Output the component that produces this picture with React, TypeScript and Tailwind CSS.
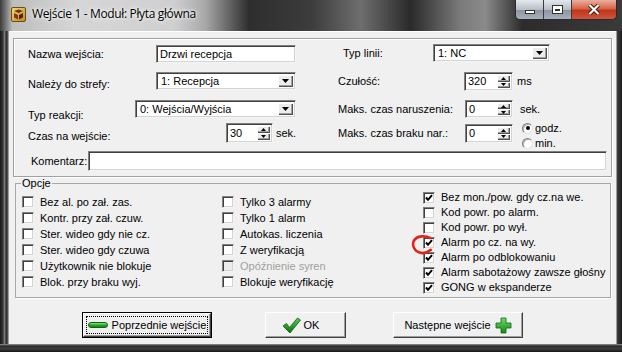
import React from "react";

const sunken =
  "bg-white border border-t-[#808080] border-l-[#808080] border-b-[#f4f4f4] border-r-[#f4f4f4] shadow-[inset_1px_1px_0_#404040,inset_-1px_-1px_0_#d4d4d4]";
const bevel =
  "bg-[#ececec] shadow-[inset_1px_1px_0_#ffffff,inset_-1px_-1px_0_#505050,inset_-2px_-2px_0_#a0a0a0]";
const btn =
  "bg-[#f0f0f0] border border-t-white border-l-white border-b-[#404040] border-r-[#404040] shadow-[inset_-1px_-1px_0_#a0a0a0]";

function Tri({ up = false, small = false }: { up?: boolean; small?: boolean }) {
  const w = small ? 5 : 7;
  const h = small ? 3 : 4;
  return (
    <svg width={w} height={h} viewBox={`0 0 ${w} ${h}`}>
      <polygon points={up ? `0,${h} ${w},${h} ${w / 2},0` : `0,0 ${w},0 ${w / 2},${h}`} fill="#000" />
    </svg>
  );
}

function Field({ value, className }: { value: string; className: string }) {
  return <div className={`${sunken} flex h-full items-center pl-[3px] ${className}`}>{value}</div>;
}

function Select({ value, className }: { value: string; className: string }) {
  return (
    <div className={`${sunken} flex h-full items-stretch p-[2px] ${className}`}>
      <span className="flex flex-1 items-center pl-[2px]">{value}</span>
      <span className={`${bevel} flex w-[15px] items-center justify-center`}>
        <Tri />
      </span>
    </div>
  );
}

function Spin({ value, className }: { value: string; className: string }) {
  return (
    <div className={`${sunken} flex h-full items-stretch p-[2px] ${className}`}>
      <span className="flex flex-1 items-center pl-[1px]">{value}</span>
      <span className="flex w-[13px] flex-col">
        <span className={`${bevel} flex flex-1 items-center justify-center`}>
          <Tri up small />
        </span>
        <span className={`${bevel} flex flex-1 items-center justify-center`}>
          <Tri small />
        </span>
      </span>
    </div>
  );
}

function Box({ label, on = false, disabled = false }: { label: string; on?: boolean; disabled?: boolean }) {
  return (
    <div className="flex h-full items-center">
      <span
        className={`flex h-[12px] w-[12px] shrink-0 items-center justify-center border border-t-[#808080] border-l-[#808080] border-b-[#f4f4f4] border-r-[#f4f4f4] shadow-[inset_1px_1px_0_#404040,inset_-1px_-1px_0_#d4d4d4] ${
          disabled ? "bg-[#ececec]" : "bg-white"
        }`}
      >
        {on && (
          <svg width="8" height="8" viewBox="0 0 8 8">
            <path d="M1 3.5 L3 5.8 L7 1.2" stroke="#000" strokeWidth="2" fill="none" />
          </svg>
        )}
      </span>
      <span className={`ml-[6px] whitespace-nowrap ${disabled ? "text-[#a0a0a0]" : ""}`}>{label}</span>
    </div>
  );
}

function Radio({ label, on = false }: { label: string; on?: boolean }) {
  return (
    <div className="flex h-[15px] items-center">
      <span className="flex h-[11px] w-[11px] items-center justify-center rounded-full border border-[#808080] border-b-[#e4e4e4] border-r-[#e4e4e4] bg-white shadow-[inset_1px_1px_0_#b0b0b0]">
        {on && <span className="h-[4px] w-[4px] rounded-full bg-black" />}
      </span>
      <span className="ml-[2px]">{label}</span>
    </div>
  );
}

function TitleIcon() {
  return (
    <svg width="15" height="15" viewBox="0 0 15 15">
      <defs>
        <linearGradient id="ig" x1="0" y1="0" x2="1" y2="1">
          <stop offset="0" stopColor="#f6de7a" />
          <stop offset="1" stopColor="#b88a1c" />
        </linearGradient>
      </defs>
      <rect x="0.5" y="0.5" width="14" height="14" rx="1.5" fill="url(#ig)" stroke="#6b4f10" />
      <path d="M3 4 L7.5 2.5 L12 4 L7.5 6 Z" fill="#7a2a10" />
      <path d="M3 6 L7 8 L7 12.5 L3 10.5 Z" fill="#8a3414" />
      <path d="M12 6 L8 8 L8 12.5 L12 10.5 Z" fill="#5a200c" />
    </svg>
  );
}

function Minus() {
  return <span className="h-[6px] w-[20px] rounded-[3px] border border-[#106010] bg-[linear-gradient(180deg,#8ee68e_0%,#30b030_45%,#138a13_100%)]" />;
}

function Plus() {
  return (
    <svg width="17" height="17" viewBox="0 0 17 17">
      <defs>
        <linearGradient id="pg" x1="0" y1="0" x2="0" y2="1">
          <stop offset="0" stopColor="#6fdc6f" />
          <stop offset="1" stopColor="#118a11" />
        </linearGradient>
      </defs>
      <path d="M6 1 H11 V6 H16 V11 H11 V16 H6 V11 H1 V6 H6 Z" fill="url(#pg)" stroke="#0e6a0e" strokeWidth="0.8" />
    </svg>
  );
}

function Tick() {
  return (
    <svg width="19" height="17" viewBox="0 0 19 17">
      <defs>
        <linearGradient id="tg" x1="0" y1="0" x2="0" y2="1">
          <stop offset="0" stopColor="#58d058" />
          <stop offset="1" stopColor="#0c700c" />
        </linearGradient>
      </defs>
      <path d="M1 9 L4.5 6.5 L7.5 10.5 L15.5 1 L18.5 3 L8 16 Z" fill="url(#tg)" stroke="#0a5a0a" strokeWidth="0.8" />
    </svg>
  );
}

export default function App() {
  return (
    <div className="flex h-[352px] w-[622px] flex-col overflow-hidden bg-[#1e1e1e] font-['Liberation_Sans',Arial,sans-serif] text-[11px] text-black">
      {/* title bar */}
      <div className="flex h-[31px] shrink-0 items-start bg-[linear-gradient(90deg,#3a3a3a_0%,#bdbdbd_2%,#d6d6d6_12%,#cfcfcf_28%,#a8a8a8_33%,#2e2e2e_40%,#3c3c3c_50%,#6e6e6e_58%,#2a2a2a_66%,#7a7a7a_74%,#8a8a8a_78%,#2c2c2c_84%,#3a3a3a_100%)]">
        <span className="ml-[11px] mt-[7px]">
          <TitleIcon />
        </span>
        <span className="ml-[6px] mt-[6px] font-['Open_Sans','Noto_Sans',sans-serif] text-[12px] leading-[16px] tracking-[-0.35px] [text-shadow:0_0_6px_#ffffff,0_0_3px_#ffffff]">
          Wejście 1 - Moduł: Płyta główna
        </span>
        <div className="ml-auto mr-[5px] flex h-[20px] overflow-hidden rounded-b-[5px] border border-t-0 border-[#2a2a2a]">
          <div className="flex w-[28px] items-end justify-center border-r border-[#3a3a3a] bg-[linear-gradient(180deg,#e4e8ee_0%,#b8bec8_50%,#8e96a2_55%,#a8b0bc_100%)] pb-[5px]">
            <span className="h-[4px] w-[10px] border border-[#303030] bg-white" />
          </div>
          <div className="flex w-[28px] items-center justify-center border-r border-[#3a3a3a] bg-[linear-gradient(180deg,#e4e8ee_0%,#b8bec8_50%,#8e96a2_55%,#a8b0bc_100%)]">
            <span className="h-[9px] w-[11px] border border-[#303030] bg-white p-[2px] pt-[3px]">
              <span className="block h-full w-full border border-[#303030] bg-[#9aa2ae]" />
            </span>
          </div>
          <div className="flex w-[44px] items-center justify-center bg-[linear-gradient(180deg,#eab0a0_0%,#d8644a_45%,#c0361c_55%,#d0543a_100%)]">
            <svg width="12" height="11" viewBox="0 0 12 11">
              <path d="M1.5 1 L10.5 10 M10.5 1 L1.5 10" stroke="#3a1208" strokeWidth="4" />
              <path d="M1.5 1 L10.5 10 M10.5 1 L1.5 10" stroke="#ffffff" strokeWidth="2.2" />
            </svg>
          </div>
        </div>
      </div>

      {/* frame + client */}
      <div className="flex h-[313px] shrink-0">
        <div className="w-[9px] bg-[linear-gradient(90deg,#161616_0%,#3c3c3c_35%,#7a7a7a_50%,#2c2c2c_70%,#5a5a5a_88%,#d8d8d8_100%)]" />
        <div className="flex w-[607px] flex-col bg-[#f0f0f0] shadow-[inset_0_1px_0_#ffffff]">
          {/* top panel */}
          <div className="ml-[4px] mt-[7px] flex h-[139px] w-[599px] flex-col border border-[#a0a0a0] shadow-[inset_1px_1px_0_#ffffff,1px_1px_0_#ffffff]">
            <div className="flex h-[105px]">
              <div className="ml-[14px] mt-[6px] flex w-[272px] flex-col">
                <div className="flex h-[18px] items-center">
                  <span className="w-[128px] shrink-0">Nazwa wejścia:</span>
                  <Field value="Drzwi recepcja" className="w-[140px]" />
                </div>
                <div className="mt-[9px] flex h-[18px] items-center">
                  <span className="w-[128px] shrink-0 pt-[6px]">Należy do strefy:</span>
                  <Select value="1: Recepcja" className="w-[140px]" />
                </div>
                <div className="mt-[10px] flex h-[18px] items-center">
                  <span className="w-[107px] shrink-0 pt-[13px]">Typ reakcji:</span>
                  <Select value="0: Wejścia/Wyjścia" className="w-[161px]" />
                </div>
                <div className="mt-[5px] flex h-[20px] items-center">
                  <span className="w-[198px] shrink-0 pt-[6px]">Czas na wejście:</span>
                  <Spin value="30" className="w-[47px]" />
                  <span className="ml-[3px]">sek.</span>
                </div>
              </div>
              <div className="ml-[38px] mt-[5px] flex flex-col">
                <div className="flex h-[18px] items-center">
                  <span className="w-[95px] shrink-0 pl-[5px]">Typ linii:</span>
                  <Select value="1: NC" className="w-[117px]" />
                </div>
                <div className="mt-[10px] flex h-[19px] items-center">
                  <span className="w-[126px] shrink-0">Czułość:</span>
                  <Spin value="320" className="w-[49px]" />
                  <span className="ml-[4px]">ms</span>
                </div>
                <div className="mt-[9px] flex h-[18px] items-center">
                  <span className="w-[127px] shrink-0">Maks. czas naruszenia:</span>
                  <Spin value="0" className="w-[48px]" />
                  <span className="ml-[7px]">sek.</span>
                </div>
                <div className="mt-[6px] flex h-[19px] items-center">
                  <span className="w-[127px] shrink-0">Maks. czas braku nar.:</span>
                  <Spin value="0" className="w-[48px]" />
                  <div className="ml-[9px] flex flex-col pt-[4px]">
                    <Radio label="godz." on />
                    <Radio label="min." />
                  </div>
                </div>
              </div>
            </div>
            <div className="mt-[7px] flex h-[20px] items-center">
              <span className="ml-[17px] w-[57px] shrink-0">Komentarz:</span>
              <Field value="" className="w-[519px]" />
            </div>
          </div>

          {/* options */}
          <fieldset className="ml-[6px] h-[121px] w-[596px] border border-[#a7a7a7] shadow-[1px_1px_0_#ffffff]">
            <legend className="ml-[5px] px-[1px] leading-[13px]">Opcje</legend>
            <div className="flex">
              <div className="ml-[6px] flex w-[200px] flex-col pt-[4px]">
                {[
                  "Bez al. po zał. zas.",
                  "Kontr. przy zał. czuw.",
                  "Ster. wideo gdy nie cz.",
                  "Ster. wideo gdy czuwa",
                  "Użytkownik nie blokuje",
                  "Blok. przy braku wyj.",
                ].map((t) => (
                  <div key={t} className="h-[16px]">
                    <Box label={t} />
                  </div>
                ))}
              </div>
              <div className="flex w-[201px] flex-col pt-[4px]">
                <div className="h-[16px]"><Box label="Tylko 3 alarmy" /></div>
                <div className="h-[16px]"><Box label="Tylko 1 alarm" /></div>
                <div className="h-[16px]"><Box label="Autokas. liczenia" /></div>
                <div className="h-[16px]"><Box label="Z weryfikacją" /></div>
                <div className="h-[16px]"><Box label="Opóźnienie syren" disabled /></div>
                <div className="h-[16px]"><Box label="Blokuje weryfikację" /></div>
              </div>
              <div className="flex flex-col">
                <div className="h-[15px]"><Box label="Bez mon./pow. gdy cz.na we." on /></div>
                <div className="h-[15px]"><Box label="Kod powr. po alarm." /></div>
                <div className="h-[15px]"><Box label="Kod powr. po wył." /></div>
                <div className="relative h-[15px]">
                  <Box label="Alarm po cz. na wy." on />
                  <svg className="absolute left-[-12px] top-[-3px]" width="26" height="24" viewBox="0 0 26 24">
                    <path
                      d="M19 6 C14 3.2, 6 3.6, 3 8.5 C0.8 12.5, 2.8 18.8, 8.5 20.6 C12.5 21.8, 16.5 20.6, 19.8 17.8"
                      stroke="#e0241c"
                      strokeWidth="2.6"
                      fill="none"
                      strokeLinecap="round"
                    />
                  </svg>
                </div>
                <div className="h-[15px]"><Box label="Alarm po odblokowaniu" on /></div>
                <div className="h-[15px]"><Box label="Alarm sabotażowy zawsze głośny" on /></div>
                <div className="h-[15px]"><Box label="GONG w ekspanderze" on /></div>
              </div>
            </div>
          </fieldset>

          {/* buttons */}
          <div className="ml-[73px] mt-[14px] flex h-[26px]">
            <div className="flex w-[130px] border border-black">
              <div className={`${btn} flex flex-1 p-[2px]`}>
                <div className="flex flex-1 items-center justify-center gap-[4px] border border-dotted border-black">
                  <Minus />
                  <span>Poprzednie wejście</span>
                </div>
              </div>
            </div>
            <div className={`${btn} ml-[53px] flex w-[81px] items-center justify-center gap-[3px] pr-[10px]`}>
              <Tick />
              <span>OK</span>
            </div>
            <div className={`${btn} ml-[47px] flex w-[130px] items-center justify-center gap-[4px]`}>
              <span>Następne wejście</span>
              <Plus />
            </div>
          </div>
        </div>
        <div className="w-[6px] bg-[linear-gradient(90deg,#cfcfcf_0%,#3a3a3a_25%,#1c1c1c_100%)]" />
      </div>
      <div className="h-[8px] shrink-0 bg-[linear-gradient(180deg,#9a9a9a_0%,#2a2a2a_25%,#3e3e3e_60%,#161616_100%)]" />
    </div>
  );
}
